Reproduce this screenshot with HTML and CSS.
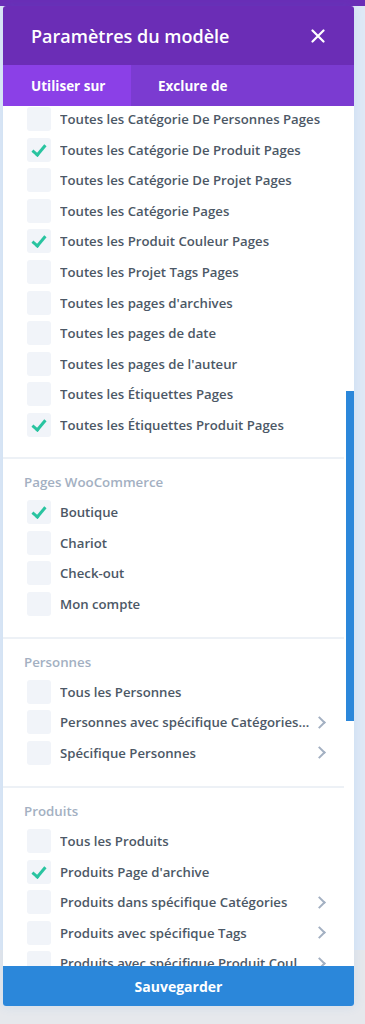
FILE: index.html
```html
<!DOCTYPE html>
<html lang="fr">
<head>
    <meta charset="UTF-8">
    <meta name="viewport" content="width=device-width, initial-scale=1.0">
    <title>Paramètres du modèle</title>
    <link rel="stylesheet" href="styles.css">
</head>
<body>
    <div class="top-bar"></div>
    <div class="stage">
        <div class="modal">
            <header class="modal-header">
                <h1>Paramètres du modèle</h1>
                <span class="close">
                    <svg width="14" height="14" viewBox="0 0 14 14"><path d="M1.5 1.5L12.5 12.5M12.5 1.5L1.5 12.5" stroke="#fff" stroke-width="2.2" stroke-linecap="round"/></svg>
                </span>
            </header>
            <nav class="tabs">
                <div class="tab active">Utiliser sur</div>
                <div class="tab">Exclure de</div>
            </nav>

            <div class="modal-body">
                <div class="section first">
                    <div class="row"><span class="box"></span><span class="label">Toutes les Catégorie De Personnes Pages</span></div>
                    <div class="row"><span class="box checked"></span><span class="label">Toutes les Catégorie De Produit Pages</span></div>
                    <div class="row"><span class="box"></span><span class="label">Toutes les Catégorie De Projet Pages</span></div>
                    <div class="row"><span class="box"></span><span class="label">Toutes les Catégorie Pages</span></div>
                    <div class="row"><span class="box checked"></span><span class="label">Toutes les Produit Couleur Pages</span></div>
                    <div class="row"><span class="box"></span><span class="label">Toutes les Projet Tags Pages</span></div>
                    <div class="row"><span class="box"></span><span class="label">Toutes les pages d'archives</span></div>
                    <div class="row"><span class="box"></span><span class="label">Toutes les pages de date</span></div>
                    <div class="row"><span class="box"></span><span class="label">Toutes les pages de l'auteur</span></div>
                    <div class="row"><span class="box"></span><span class="label">Toutes les Étiquettes Pages</span></div>
                    <div class="row"><span class="box checked"></span><span class="label">Toutes les Étiquettes Produit Pages</span></div>
                </div>

                <div class="section">
                    <div class="section-title">Pages WooCommerce</div>
                    <div class="row"><span class="box checked"></span><span class="label">Boutique</span></div>
                    <div class="row"><span class="box"></span><span class="label">Chariot</span></div>
                    <div class="row"><span class="box"></span><span class="label">Check-out</span></div>
                    <div class="row"><span class="box"></span><span class="label">Mon compte</span></div>
                </div>

                <div class="section">
                    <div class="section-title">Personnes</div>
                    <div class="row"><span class="box"></span><span class="label">Tous les Personnes</span></div>
                    <div class="row more"><span class="box"></span><span class="label">Personnes avec spécifique Catégories de personnes</span><span class="chevron"></span></div>
                    <div class="row more"><span class="box"></span><span class="label">Spécifique Personnes</span><span class="chevron"></span></div>
                </div>

                <div class="section">
                    <div class="section-title">Produits</div>
                    <div class="row"><span class="box"></span><span class="label">Tous les Produits</span></div>
                    <div class="row"><span class="box checked"></span><span class="label">Produits Page d'archive</span></div>
                    <div class="row more"><span class="box"></span><span class="label">Produits dans spécifique Catégories</span><span class="chevron"></span></div>
                    <div class="row more"><span class="box"></span><span class="label">Produits avec spécifique Tags</span><span class="chevron"></span></div>
                    <div class="row more"><span class="box"></span><span class="label">Produits avec spécifique Produit Couleur</span><span class="chevron"></span></div>
                </div>

                <div class="scroll-thumb"></div>
            </div>

            <button class="save">Sauvegarder</button>
        </div>
    </div>
</body>
</html>
```

FILE: styles.css
```css
body {
    margin: 0;
    padding: 0;
    font-family: "Open Sans", "Noto Sans", sans-serif;
    background: linear-gradient(to bottom, #dfe9f6 0, #dfe9f6 950px, #e6e8ec 950px);
    height: 1024px;
    overflow: hidden;
}

.top-bar {
    height: 6px;
    background-color: #6b2db6;
}

.stage {
    padding-left: 3px;
}

.modal {
    width: 351px;
    height: 1000px;
    display: flex;
    flex-direction: column;
    background-color: #fff;
    border-radius: 3px;
    overflow: hidden;
    box-shadow: 0 0 12px rgba(43, 135, 218, 0.12);
}

.modal-header {
    height: 59px;
    flex-shrink: 0;
    display: flex;
    align-items: center;
    justify-content: space-between;
    padding: 0 29px 0 28px;
    background-color: #6b2db6;
    box-sizing: border-box;
}

.modal-header h1 {
    margin: 0;
    font-size: 18px;
    font-weight: 600;
    color: #fff;
}

.close {
    display: flex;
    margin-top: 1px;
}

.tabs {
    height: 41px;
    flex-shrink: 0;
    display: flex;
    background-color: #7b3bd1;
}

.tab {
    display: flex;
    align-items: center;
    padding: 0 0 0 27px;
    font-size: 13.5px;
    font-weight: 700;
    color: #fff;
    white-space: nowrap;
}

.tab.active {
    width: 128px;
    padding-left: 28px;
    box-sizing: border-box;
    background-color: #8b40e7;
}

.modal-body {
    flex: 1;
    position: relative;
    overflow: hidden;
    padding-right: 10px;
}

.section {
    padding: 13px 0 21px 21px;
    border-bottom: 2px solid #edf1f6;
}

.section.first {
    padding-top: 1px;
    padding-bottom: 20px;
}

.section-title {
    height: 20px;
    line-height: 20px;
    margin-bottom: 8px;
    font-size: 13.3px;
    font-weight: 600;
    color: #a3b0c2;
}

.row {
    display: flex;
    align-items: center;
    height: 24px;
    margin-bottom: 6.6px;
    padding-left: 3px;
    padding-right: 18px;
}

.row:last-child {
    margin-bottom: 0;
}

.box {
    flex-shrink: 0;
    width: 24px;
    height: 24px;
    margin-right: 9px;
    border-radius: 3px;
    background-color: #f1f4f9;
    position: relative;
}

.box.checked::after {
    content: "";
    position: absolute;
    left: 8px;
    top: 4px;
    width: 5px;
    height: 11px;
    border-right: 3px solid #29c4a0;
    border-bottom: 3px solid #29c4a0;
    transform: rotate(40deg);
}

.label {
    font-size: 13.2px;
    font-weight: 600;
    color: #4c5866;
    white-space: nowrap;
    overflow: hidden;
    text-overflow: ellipsis;
    flex: 1;
}

.chevron {
    flex-shrink: 0;
    width: 7px;
    height: 7px;
    margin-left: 5px;
    margin-right: 2px;
    border-top: 2px solid #a3b0c2;
    border-right: 2px solid #a3b0c2;
    transform: rotate(45deg);
}

.scroll-thumb {
    position: absolute;
    right: 0;
    top: 285px;
    width: 8px;
    height: 330px;
    background-color: #2b87da;
}

.save {
    height: 40px;
    flex-shrink: 0;
    border: none;
    background-color: #2b87da;
    color: #fff;
    font-family: "Open Sans", "Noto Sans", sans-serif;
    font-size: 14px;
    font-weight: 700;
    cursor: pointer;
}
```
